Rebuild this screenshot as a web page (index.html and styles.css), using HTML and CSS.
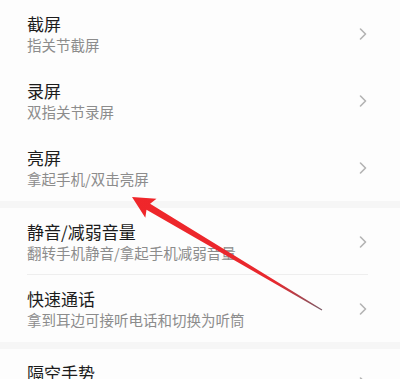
FILE: index.html
```html
<!DOCTYPE html>
<html lang="zh-CN">
<head>
<meta charset="utf-8">
<link rel="stylesheet" href="styles.css">
</head>
<body>
<div class="page">
  <div class="group">
    <div class="row">
      <div class="text"><div class="title">截屏</div><div class="sub">指关节截屏</div></div>
      <svg class="chev" viewBox="0 0 8 12"><path d="M1.5 1 L6.5 6 L1.5 11"/></svg>
    </div>
    <div class="row">
      <div class="text"><div class="title">录屏</div><div class="sub">双指关节录屏</div></div>
      <svg class="chev" viewBox="0 0 8 12"><path d="M1.5 1 L6.5 6 L1.5 11"/></svg>
    </div>
    <div class="row">
      <div class="text"><div class="title">亮屏</div><div class="sub">拿起手机/双击亮屏</div></div>
      <svg class="chev" viewBox="0 0 8 12"><path d="M1.5 1 L6.5 6 L1.5 11"/></svg>
    </div>
  </div>
  <div class="band"></div>
  <div class="group">
    <div class="row divided">
      <div class="text"><div class="title">静音/减弱音量</div><div class="sub">翻转手机静音/拿起手机减弱音量</div></div>
      <svg class="chev" viewBox="0 0 8 12"><path d="M1.5 1 L6.5 6 L1.5 11"/></svg>
    </div>
    <div class="row">
      <div class="text"><div class="title">快速通话</div><div class="sub">拿到耳边可接听电话和切换为听筒</div></div>
      <svg class="chev" viewBox="0 0 8 12"><path d="M1.5 1 L6.5 6 L1.5 11"/></svg>
    </div>
  </div>
  <div class="band"></div>
  <div class="group">
    <div class="row">
      <div class="text"><div class="title">隔空手势</div><div class="sub">隔空截屏/隔空滑动</div></div>
      <svg class="chev" viewBox="0 0 8 12"><path d="M1.5 1 L6.5 6 L1.5 11"/></svg>
    </div>
  </div>
  <svg class="arrow" viewBox="0 0 400 379" width="400" height="379">
    <defs>
      <linearGradient id="ag" x1="132" y1="197" x2="322" y2="310" gradientUnits="userSpaceOnUse">
        <stop offset="0" stop-color="#f0262a"/>
        <stop offset="0.75" stop-color="#e8282e"/>
        <stop offset="1" stop-color="#7a5a66"/>
      </linearGradient>
    </defs>
    <polygon fill="url(#ag)" points="132,197 156.5,198.7 150.1,203.7 322.3,309.6 321.7,310.4 146.5,209.7 145.3,217.7"/>
  </svg>
</div>
</body>
</html>
```
FILE: styles.css
```css
html, body {
  margin: 0;
  padding: 0;
  background: #fdfdfd;
}
.page {
  position: relative;
  width: 400px;
  height: 379px;
  overflow: hidden;
  font-family: "Noto Sans CJK SC", "Noto Sans", sans-serif;
}
.group {
  background: #fdfdfd;
}
.row {
  height: 67px;
  display: flex;
  align-items: center;
  justify-content: space-between;
  padding: 0 33px 0 27px;
  position: relative;
}
.row.divided::after {
  content: "";
  position: absolute;
  left: 27px;
  right: 32px;
  bottom: 0;
  height: 1px;
  background: #eeeeee;
}
.text {
  display: flex;
  flex-direction: column;
}
.title {
  font-size: 17px;
  line-height: 23px;
  color: #1c1c1c;
}
.sub {
  font-size: 14.5px;
  line-height: 20px;
  color: #8c8c8c;
}
.chev {
  width: 8px;
  height: 12px;
  fill: none;
  stroke: #b3b3b3;
  stroke-width: 1.6;
  stroke-linecap: round;
  stroke-linejoin: round;
}
.band {
  height: 7px;
  background: #f6f6f6;
}
.arrow {
  position: absolute;
  left: 0;
  top: 0;
  pointer-events: none;
}
```
